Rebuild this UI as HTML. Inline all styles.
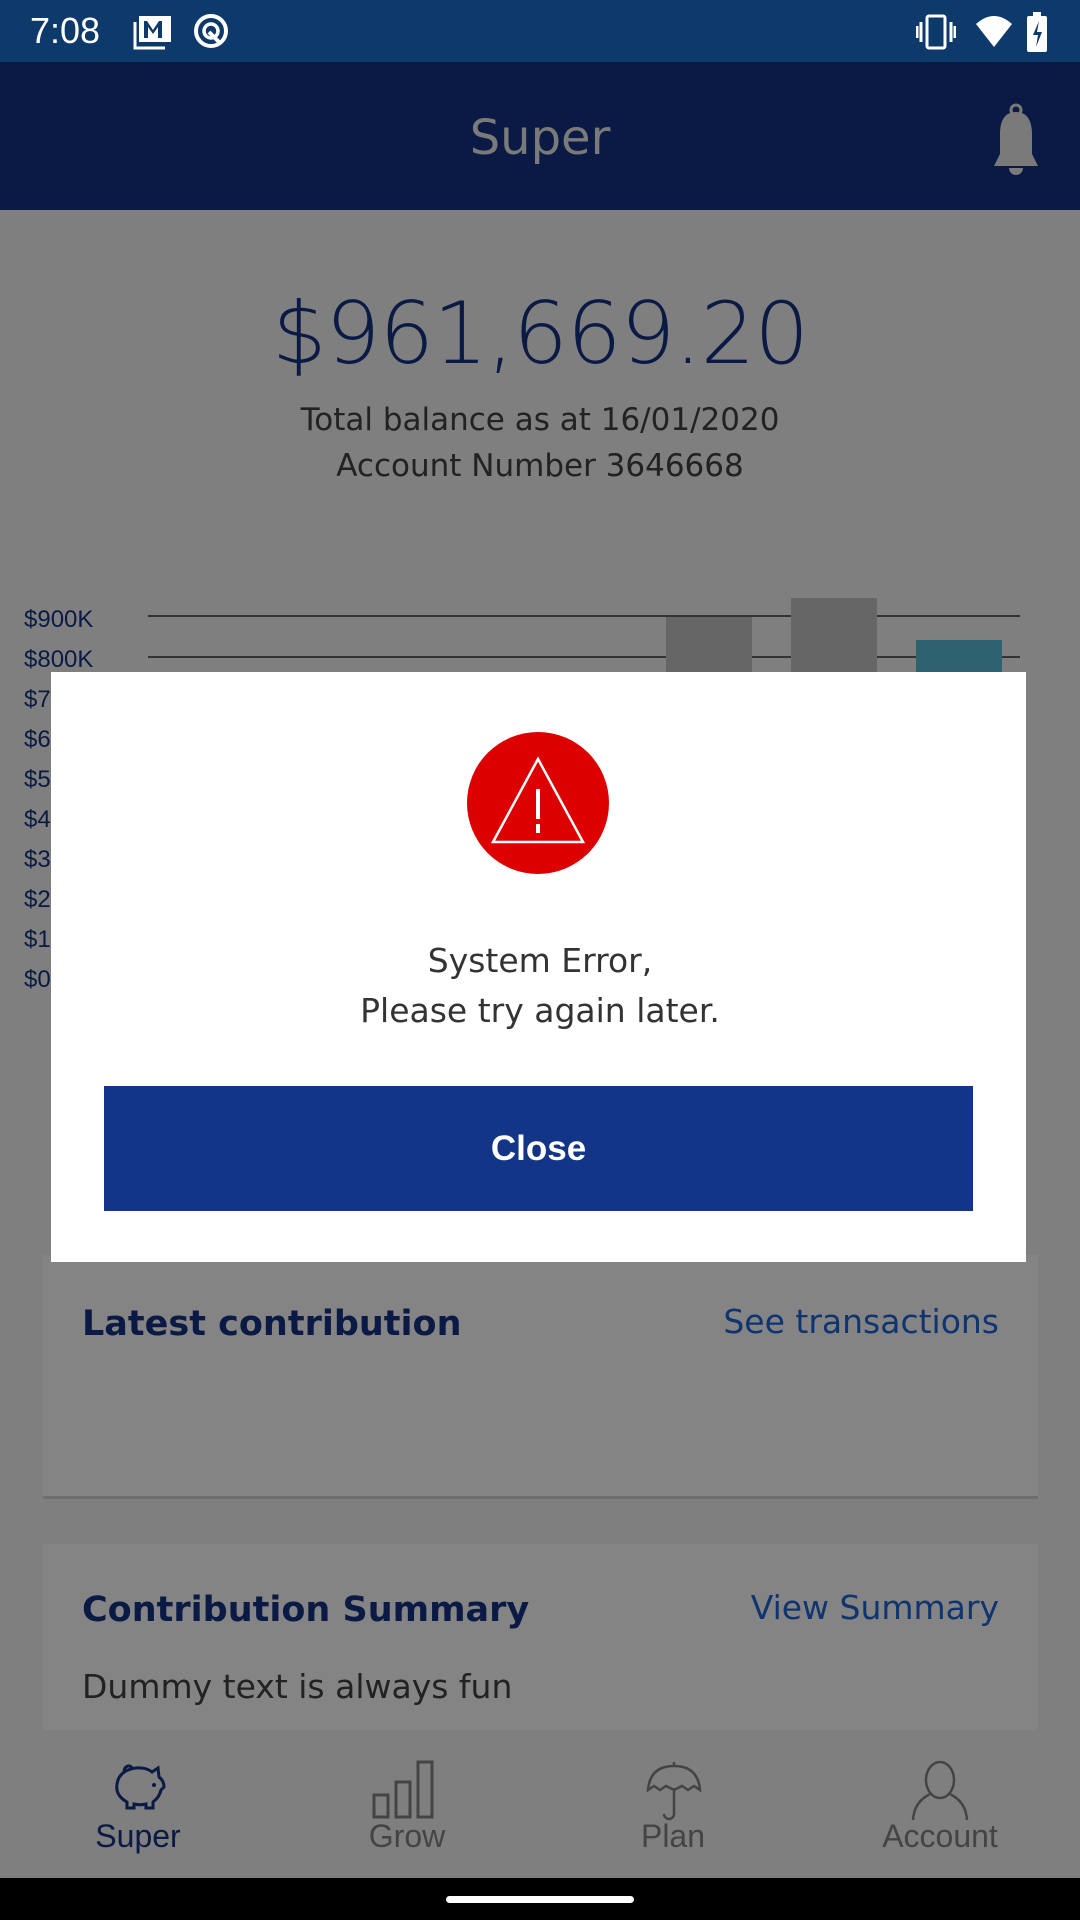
<!DOCTYPE html>
<html><head><meta charset="utf-8"><style>
*{margin:0;padding:0;box-sizing:border-box}
body{width:1080px;height:1920px;overflow:hidden;background:#7f7f7f;font-family:"Liberation Sans",sans-serif;position:relative}
.a{position:absolute}
.c{left:0;width:1080px;text-align:center}
</style></head><body>
<div class="a" style="left:0;top:0;width:1080px;height:62px;background:#0d3a6b"></div>
<div class="a" style="left:30px;top:10px;color:#fff;font-size:36px;">7:08</div>
<svg class="a" style="left:133px;top:14px" width="40" height="36" viewBox="0 0 40 36"><rect x="6" y="2" width="32" height="26" fill="#fff"/><path d="M11 24V7h3l6 9 6-9h3v17h-4V13l-5 7-5-7v11z" fill="#0d3a6b"/><path d="M2 8v26h30" stroke="#fff" stroke-width="3" fill="none"/></svg>
<svg class="a" style="left:192px;top:12px" width="38" height="38" viewBox="0 0 38 38"><circle cx="19" cy="19" r="15" stroke="#fff" stroke-width="4" fill="none"/><circle cx="19" cy="19" r="7" stroke="#fff" stroke-width="3.5" fill="none"/><path d="M17 20l12 12" stroke="#fff" stroke-width="4"/></svg>
<svg class="a" style="left:916px;top:14px" width="40" height="36" viewBox="0 0 40 36"><rect x="11" y="2" width="18" height="32" rx="2" fill="none" stroke="#fff" stroke-width="3"/><path d="M5 8v20M1 12v12M35 8v20M39 12v12" stroke="#fff" stroke-width="3"/></svg>
<svg class="a" style="left:974px;top:14px" width="40" height="34" viewBox="0 0 40 34"><path d="M2 10Q20-6 38 10L20 33z" fill="#fff"/></svg>
<svg class="a" style="left:1026px;top:12px" width="22" height="40" viewBox="0 0 22 40"><rect x="7" y="0" width="8" height="4" fill="#fff"/><rect x="1" y="4" width="20" height="36" rx="2" fill="#fff"/><path d="M13 9l-6 14h5l-2 12 6-15h-5z" fill="#0d3a6b"/></svg>

<div class="a" style="left:0;top:62px;width:1080px;height:148px;background:#0a1a44"></div>
<div class="a c" style="top:108px;color:#7a7a7a;font-size:48px;line-height:60px;font-family:'DejaVu Sans',sans-serif">Super</div>
<svg class="a" style="left:986px;top:102px" width="60" height="76" viewBox="0 0 60 76"><circle cx="30" cy="8" r="5" fill="none" stroke="#7a7a7a" stroke-width="3"/><path d="M30 10c-12 0-16 10-16 22v20l-6 12h44l-6-12V32c0-12-4-22-16-22z" fill="#7a7a7a"/><path d="M23 66a7 7 0 0 0 14 0z" fill="#7a7a7a"/></svg>

<div class="a c" style="top:284px;color:#0a1a44;font-size:86px;line-height:100px;font-family:'DejaVu Sans',sans-serif;font-weight:300;letter-spacing:-1px">$961,669.20</div>
<div class="a c" style="top:398px;color:#222;font-size:31px;line-height:44px;font-family:'DejaVu Sans',sans-serif">Total balance as at 16/01/2020</div>
<div class="a c" style="top:444px;color:#222;font-size:31px;line-height:44px;font-family:'DejaVu Sans',sans-serif">Account Number 3646668</div>

<div class="a" style="left:148px;top:615px;width:872px;height:1.5px;background:#333"></div>
<div class="a" style="left:148px;top:656px;width:872px;height:1.5px;background:#333"></div>
<div class="a" style="left:666px;top:617px;width:86px;height:60px;background:#666"></div>
<div class="a" style="left:791px;top:598px;width:86px;height:80px;background:#666"></div>
<div class="a" style="left:916px;top:640px;width:86px;height:40px;background:#2e6270"></div>
<div class="a" style="left:24px;top:600px;color:#0a1a44;font-size:24px;line-height:40px;font-family:'Liberation Sans Narrow','Liberation Sans',sans-serif">$900K<br>$800K<br>$7<br>$6<br>$5<br>$4<br>$3<br>$2<br>$1<br>$0</div>

<div class="a" style="left:43px;top:1255px;width:995px;height:244px;background:#848484;border-bottom:3px solid #6e6e6e"></div>
<div class="a" style="left:82px;top:1304px;color:#0a1a44;font-size:35px;font-weight:bold;font-family:'DejaVu Sans',sans-serif">Latest contribution</div>
<div class="a" style="right:81px;top:1302px;color:#0f3470;font-size:33px;font-family:'DejaVu Sans',sans-serif">See transactions</div>
<div class="a" style="left:43px;top:1544px;width:995px;height:200px;background:#848484"></div>
<div class="a" style="left:82px;top:1590px;color:#0a1a44;font-size:35px;font-weight:bold;font-family:'DejaVu Sans',sans-serif">Contribution Summary</div>
<div class="a" style="right:81px;top:1588px;color:#0f3470;font-size:33px;font-family:'DejaVu Sans',sans-serif">View Summary</div>
<div class="a" style="left:82px;top:1667px;color:#222;font-size:33px;font-family:'DejaVu Sans',sans-serif">Dummy text is always fun</div>

<div class="a" style="left:0;top:1730px;width:1080px;height:148px;background:#7f7f7f"></div>
<svg class="a" style="left:108px;top:1758px" width="62" height="62" viewBox="0 0 62 62"><path d="M10 22c4-12 24-16 34-8l6-4 1 9c4 3 5 7 5 10l-3 3c-2 8-6 10-8 12v6h-7v-4c-4 1-8 1-12 0v4h-7v-6C12 40 6 34 10 22z M16 14c0-6 6-8 8-4" fill="none" stroke="#0a1a44" stroke-width="3"/><circle cx="46" cy="27" r="2" fill="#0a1a44"/></svg>
<div class="a" style="left:58px;top:1818px;width:160px;text-align:center;color:#0a1a44;font-size:32px">Super</div>
<svg class="a" style="left:372px;top:1760px" width="70" height="60" viewBox="0 0 70 60"><rect x="2" y="35" width="14" height="22" fill="none" stroke="#444" stroke-width="3"/><rect x="24" y="22" width="14" height="35" fill="none" stroke="#444" stroke-width="3"/><rect x="46" y="2" width="14" height="55" fill="none" stroke="#444" stroke-width="3"/></svg>
<div class="a" style="left:327px;top:1818px;width:160px;text-align:center;color:#444;font-size:32px">Grow</div>
<svg class="a" style="left:644px;top:1760px" width="60" height="62" viewBox="0 0 60 62"><path d="M30 2v4M4 30Q6 6 30 6Q54 6 56 30L50 26 44 30 38 26 30 30 22 26 16 30 10 26z" fill="none" stroke="#444" stroke-width="2.5"/><path d="M30 28v26a5 5 0 0 1-10 0" fill="none" stroke="#444" stroke-width="2.5"/></svg>
<div class="a" style="left:593px;top:1818px;width:160px;text-align:center;color:#444;font-size:32px">Plan</div>
<svg class="a" style="left:910px;top:1760px" width="60" height="62" viewBox="0 0 60 62"><ellipse cx="30" cy="20" rx="14" ry="18" fill="none" stroke="#444" stroke-width="2.5"/><path d="M20 34Q4 42 3 60M40 34Q56 42 57 60" fill="none" stroke="#444" stroke-width="2.5"/></svg>
<div class="a" style="left:860px;top:1818px;width:160px;text-align:center;color:#444;font-size:32px">Account</div>

<div class="a" style="left:0;top:1878px;width:1080px;height:42px;background:#000"></div>
<div class="a" style="left:446px;top:1896px;width:188px;height:7px;border-radius:4px;background:#fff"></div>

<div class="a" style="left:51px;top:672px;width:975px;height:590px;background:#fff"></div>
<svg class="a" style="left:467px;top:732px" width="142" height="142" viewBox="0 0 142 142"><circle cx="71" cy="71" r="71" fill="#dd0000"/><path d="M71 27L26 110h90z" fill="none" stroke="#fff" stroke-width="2.5"/><rect x="69" y="57" width="4" height="30" fill="#fff"/><rect x="69" y="92" width="4" height="9" fill="#fff"/></svg>
<div class="a c" style="top:936px;color:#333;font-size:33px;line-height:50px;font-family:'DejaVu Sans',sans-serif">System Error,<br>Please try again later.</div>
<div class="a" style="left:104px;top:1086px;width:869px;height:125px;background:#133587;color:#fff;font-size:35px;font-weight:bold;text-align:center;line-height:125px">Close</div>
</body></html>
